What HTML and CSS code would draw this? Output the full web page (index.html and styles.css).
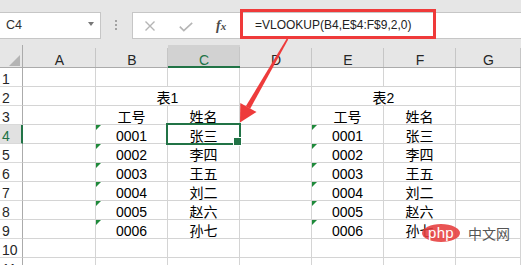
FILE: index.html
```html
<!DOCTYPE html>
<html>
<head>
<meta charset="utf-8">
<link rel="stylesheet" href="styles.css">
</head>
<body>
<div class="toolbar">
  <div class="namebox"><span>C4</span><i class="caret"></i></div>
  <div class="grip"><i></i><i></i><i></i></div>
  <div class="fbar">
    <div class="fbtns">
      <svg class="ico-x" width="10" height="10" viewBox="0 0 10 10"><path d="M0.5 0.5L9.5 9.5M9.5 0.5L0.5 9.5" stroke="#b5b5b5" stroke-width="1.4" fill="none"/></svg>
      <svg class="ico-ok" width="14" height="10" viewBox="0 0 14 10"><path d="M0.8 4.6L4.8 8.6L13.2 0.8" stroke="#b5b5b5" stroke-width="1.6" fill="none"/></svg>
      <span class="fx">f<span class="fx-x">x</span></span>
    </div>
    <div class="ftext">=VLOOKUP(B4,E$4:F$9,2,0)</div>
  </div>
</div>

<div class="sheet">
  <div class="corner"></div>
  <div class="h">A</div><div class="h">B</div><div class="h sel">C</div><div class="h">D</div><div class="h">E</div><div class="h">F</div><div class="h">G</div>

  <div class="r">1</div><div class="c"></div><div class="c"></div><div class="c"></div><div class="c"></div><div class="c"></div><div class="c"></div><div class="c"></div>

  <div class="r">2</div><div class="c"></div><div class="c m2">表1</div><div class="c"></div><div class="c m2">表2</div><div class="c"></div>

  <div class="r">3</div><div class="c"></div><div class="c">工号</div><div class="c">姓名</div><div class="c"></div><div class="c">工号</div><div class="c">姓名</div><div class="c"></div>

  <div class="r sel">4</div><div class="c"></div><div class="c t">0001</div><div class="c act">张三</div><div class="c"></div><div class="c t">0001</div><div class="c">张三</div><div class="c"></div>

  <div class="r">5</div><div class="c"></div><div class="c t">0002</div><div class="c">李四</div><div class="c"></div><div class="c t">0002</div><div class="c">李四</div><div class="c"></div>

  <div class="r">6</div><div class="c"></div><div class="c t">0003</div><div class="c">王五</div><div class="c"></div><div class="c t">0003</div><div class="c">王五</div><div class="c"></div>

  <div class="r">7</div><div class="c"></div><div class="c t">0004</div><div class="c">刘二</div><div class="c"></div><div class="c t">0004</div><div class="c">刘二</div><div class="c"></div>

  <div class="r">8</div><div class="c"></div><div class="c t">0005</div><div class="c">赵六</div><div class="c"></div><div class="c t">0005</div><div class="c">赵六</div><div class="c"></div>

  <div class="r">9</div><div class="c"></div><div class="c t">0006</div><div class="c">孙七</div><div class="c"></div><div class="c t">0006</div><div class="c">孙七</div><div class="c"></div>

  <div class="r">10</div><div class="c"></div><div class="c"></div><div class="c"></div><div class="c"></div><div class="c"></div><div class="c"></div><div class="c"></div>

  <div class="r">11</div><div class="c"></div><div class="c"></div><div class="c"></div><div class="c"></div><div class="c"></div><div class="c"></div><div class="c"></div>
</div>

<div class="mark"></div>

<svg class="arrow" width="521" height="265" viewBox="0 0 521 265">
  <polygon points="288.2,39.4 286.8,38.6 245.8,106.3 250.2,108.7" fill="#ee3b3b"/>
  <polygon points="240,122.5 240.3,103 256.5,112" fill="#ee3b3b"/>
</svg>

<div class="logo">
  <div class="pill">php</div>
  <div class="cn">中文网</div>
</div>
</body>
</html>
```

FILE: styles.css
```css
* { box-sizing: border-box; }

body {
  margin: 0;
  width: 521px;
  height: 265px;
  overflow: hidden;
  position: relative;
  background: #ffffff;
  font-family: "Liberation Sans", "Noto Sans CJK SC", sans-serif;
}

/* ---------- toolbar / formula bar ---------- */
.toolbar {
  height: 45px;
  padding-top: 12px;
  display: flex;
  align-items: flex-start;
  background: #e6e6e6;
}

.namebox {
  width: 102px;
  height: 27px;
  margin-left: -1px;
  border: 1px solid #c6c6c6;
  background: #ffffff;
  display: flex;
  align-items: center;
  justify-content: space-between;
  padding: 0 6px 0 6px;
  font-size: 12.5px;
  line-height: 25px;
  color: #303030;
}

.caret {
  width: 0;
  height: 0;
  border-left: 3.5px solid transparent;
  border-right: 3.5px solid transparent;
  border-top: 4px solid #777777;
  margin-bottom: 4px;
}

.grip {
  margin-left: 14px;
  margin-top: 8px;
  display: flex;
  flex-direction: column;
  gap: 2px;
}
.grip i {
  display: block;
  width: 2px;
  height: 2px;
  background: #a3a3a3;
}

.fbar {
  flex: 1;
  margin-left: 15px;
  margin-right: -1px;
  height: 27px;
  border: 1px solid #c6c6c6;
  background: #ffffff;
  display: flex;
  align-items: center;
}

.fbtns {
  width: 121px;
  flex: none;
  display: flex;
  align-items: center;
  padding-left: 12px;
}
.ico-x { display: block; margin-top: 1px; }
.ico-ok { display: block; margin-left: 24px; margin-top: 2px; }
.fx {
  margin-left: 23px;
  font-family: "Liberation Serif", serif;
  font-style: italic;
  font-weight: bold;
  font-size: 14px;
  color: #4a4a4a;
  line-height: 20px;
}
.fx-x { font-size: 11px; }

.ftext {
  font-size: 12px;
  line-height: 25px;
  color: #222222;
  white-space: nowrap;
  padding-left: 1px;
}

/* ---------- sheet ---------- */
.sheet {
  display: grid;
  grid-template-columns: 23px 73px 72px 72px 72px 72px 72px 1fr;
  grid-template-rows: 23px;
  grid-auto-rows: 19px;
}

.corner {
  background: #e6e6e6;
  border-right: 1px solid #ababab;
  border-bottom: 1px solid #ababab;
  display: flex;
  justify-content: flex-end;
  align-items: flex-end;
  padding: 0 2px 1px 0;
}
.corner::before {
  content: "";
  width: 0;
  height: 0;
  border-left: 11px solid transparent;
  border-bottom: 11px solid #b4b4b4;
}

.h {
  background-color: #e6e6e6;
  background-image: linear-gradient(#c6c6c6, #c6c6c6);
  background-repeat: no-repeat;
  background-position: right bottom;
  background-size: 1px 19px;
  border-bottom: 1px solid #ababab;
  font-size: 14px;
  line-height: 16px;
  padding-top: 7px;
  text-align: center;
  color: #262626;
}
.h.sel {
  background-color: #d2d2d2;
  color: #217346;
  border-bottom: 2px solid #217346;
}

.r {
  background: #ffffff;
  border-right: 1px solid #ababab;
  border-bottom: 1px solid #d9d9d9;
  font-size: 14px;
  line-height: 16px;
  padding: 3px 0 0 2px;
  color: #262626;
  white-space: nowrap;
}
.r.sel {
  background: #e1e1e1;
  color: #217346;
  border-right: 2px solid #217346;
}

.c {
  position: relative;
  border-right: 1px solid #d4d4d4;
  border-bottom: 1px solid #d4d4d4;
  font-size: 14px;
  line-height: 16px;
  padding-top: 3px;
  text-align: center;
  color: #000000;
  white-space: nowrap;
}
.c.m2 { grid-column: span 2; }

.c.t::before {
  content: "";
  position: absolute;
  left: 0;
  top: 0;
  width: 0;
  height: 0;
  border-top: 5px solid #1f8a3b;
  border-right: 5px solid transparent;
}

.c.act::after {
  content: "";
  position: absolute;
  inset: -2px;
  border: 2px solid #217346;
  z-index: 2;
}
.c.act::before {
  content: "";
  position: absolute;
  right: -3px;
  bottom: -3px;
  width: 7px;
  height: 7px;
  background: #217346;
  border: 1px solid #ffffff;
  z-index: 3;
}

/* ---------- annotations ---------- */
.mark {
  position: absolute;
  left: 240px;
  top: 9px;
  width: 196px;
  height: 30px;
  border: 3px solid #ef3a3a;
}

.arrow {
  position: absolute;
  left: 0;
  top: 0;
  pointer-events: none;
}

.logo {
  position: absolute;
  left: 422px;
  top: 224px;
  display: flex;
  align-items: center;
}
.pill {
  width: 38px;
  height: 18px;
  border-radius: 50%;
  background: rgba(230, 60, 60, 0.88);
  color: #ffffff;
  font-family: "Liberation Sans", sans-serif;
  font-size: 15px;
  line-height: 17px;
  text-align: center;
  letter-spacing: 0.3px;
}
.cn {
  margin-left: 8px;
  font-family: "Noto Sans CJK SC", sans-serif;
  font-size: 14px;
  line-height: 18px;
  color: #555555;
}
```
